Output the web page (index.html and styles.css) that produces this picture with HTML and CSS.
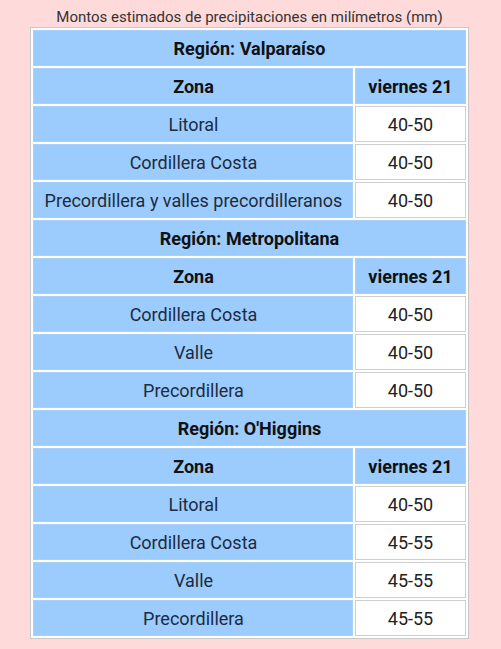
FILE: index.html
```html
<!DOCTYPE html>
<html lang="es">
<head>
<meta charset="utf-8">
<title>Montos estimados de precipitaciones</title>
<link rel="stylesheet" href="styles.css">
</head>
<body>
<table class="rain">
  <caption class="rain-caption">Montos estimados de precipitaciones en milímetros (mm)</caption>
  <colgroup>
    <col class="col-zone">
    <col class="col-day">
  </colgroup>
  <tbody>
    <tr><th class="region" colspan="2">Región: Valparaíso</th></tr>
    <tr><th class="head zone">Zona</th><th class="head day">viernes 21</th></tr>
    <tr><td class="zone">Litoral</td><td class="val">40-50</td></tr>
    <tr><td class="zone">Cordillera Costa</td><td class="val">40-50</td></tr>
    <tr><td class="zone">Precordillera y valles precordilleranos</td><td class="val">40-50</td></tr>

    <tr><th class="region" colspan="2">Región: Metropolitana</th></tr>
    <tr><th class="head zone">Zona</th><th class="head day">viernes 21</th></tr>
    <tr><td class="zone">Cordillera Costa</td><td class="val">40-50</td></tr>
    <tr><td class="zone">Valle</td><td class="val">40-50</td></tr>
    <tr><td class="zone">Precordillera</td><td class="val">40-50</td></tr>

    <tr><th class="region" colspan="2">Región: O'Higgins</th></tr>
    <tr><th class="head zone">Zona</th><th class="head day">viernes 21</th></tr>
    <tr><td class="zone">Litoral</td><td class="val">40-50</td></tr>
    <tr><td class="zone">Cordillera Costa</td><td class="val">45-55</td></tr>
    <tr><td class="zone">Valle</td><td class="val">45-55</td></tr>
    <tr><td class="zone">Precordillera</td><td class="val">45-55</td></tr>
  </tbody>
</table>
</body>
</html>
```

FILE: styles.css
```css
html, body {
  background: #ffdada;
}

body {
  margin: 8px 10px 8px 8px;
  font-family: Roboto, "Noto Sans", sans-serif;
  color: #222;
}

.rain {
  width: 437px;
  margin: 0 auto;
  border: 1px solid #c8c8c8;
  border-spacing: 2px;
  background: #ffffff;
  table-layout: fixed;
}

.col-zone {
  width: 320px;
}

.col-day {
  width: 110px;
}

.rain-caption {
  font-size: 15px;
  line-height: 19px;
  color: #333;
  white-space: nowrap;
}

.rain th,
.rain td {
  height: 34px;
  padding: 0;
  text-align: center;
  vertical-align: middle;
  font-size: 18px;
  white-space: nowrap;
}

.rain th {
  font-weight: 700;
  color: #111;
}

.region,
.zone,
.day {
  background: #9ccbfd;
  border: 1px solid #a9d1f8;
}

.zone {
  color: #1c2b3e;
  font-weight: 400;
}

.head.zone {
  color: #111;
}

.val {
  background: #ffffff;
  border: 1px solid #cfcfcf;
  color: #222;
}
```
